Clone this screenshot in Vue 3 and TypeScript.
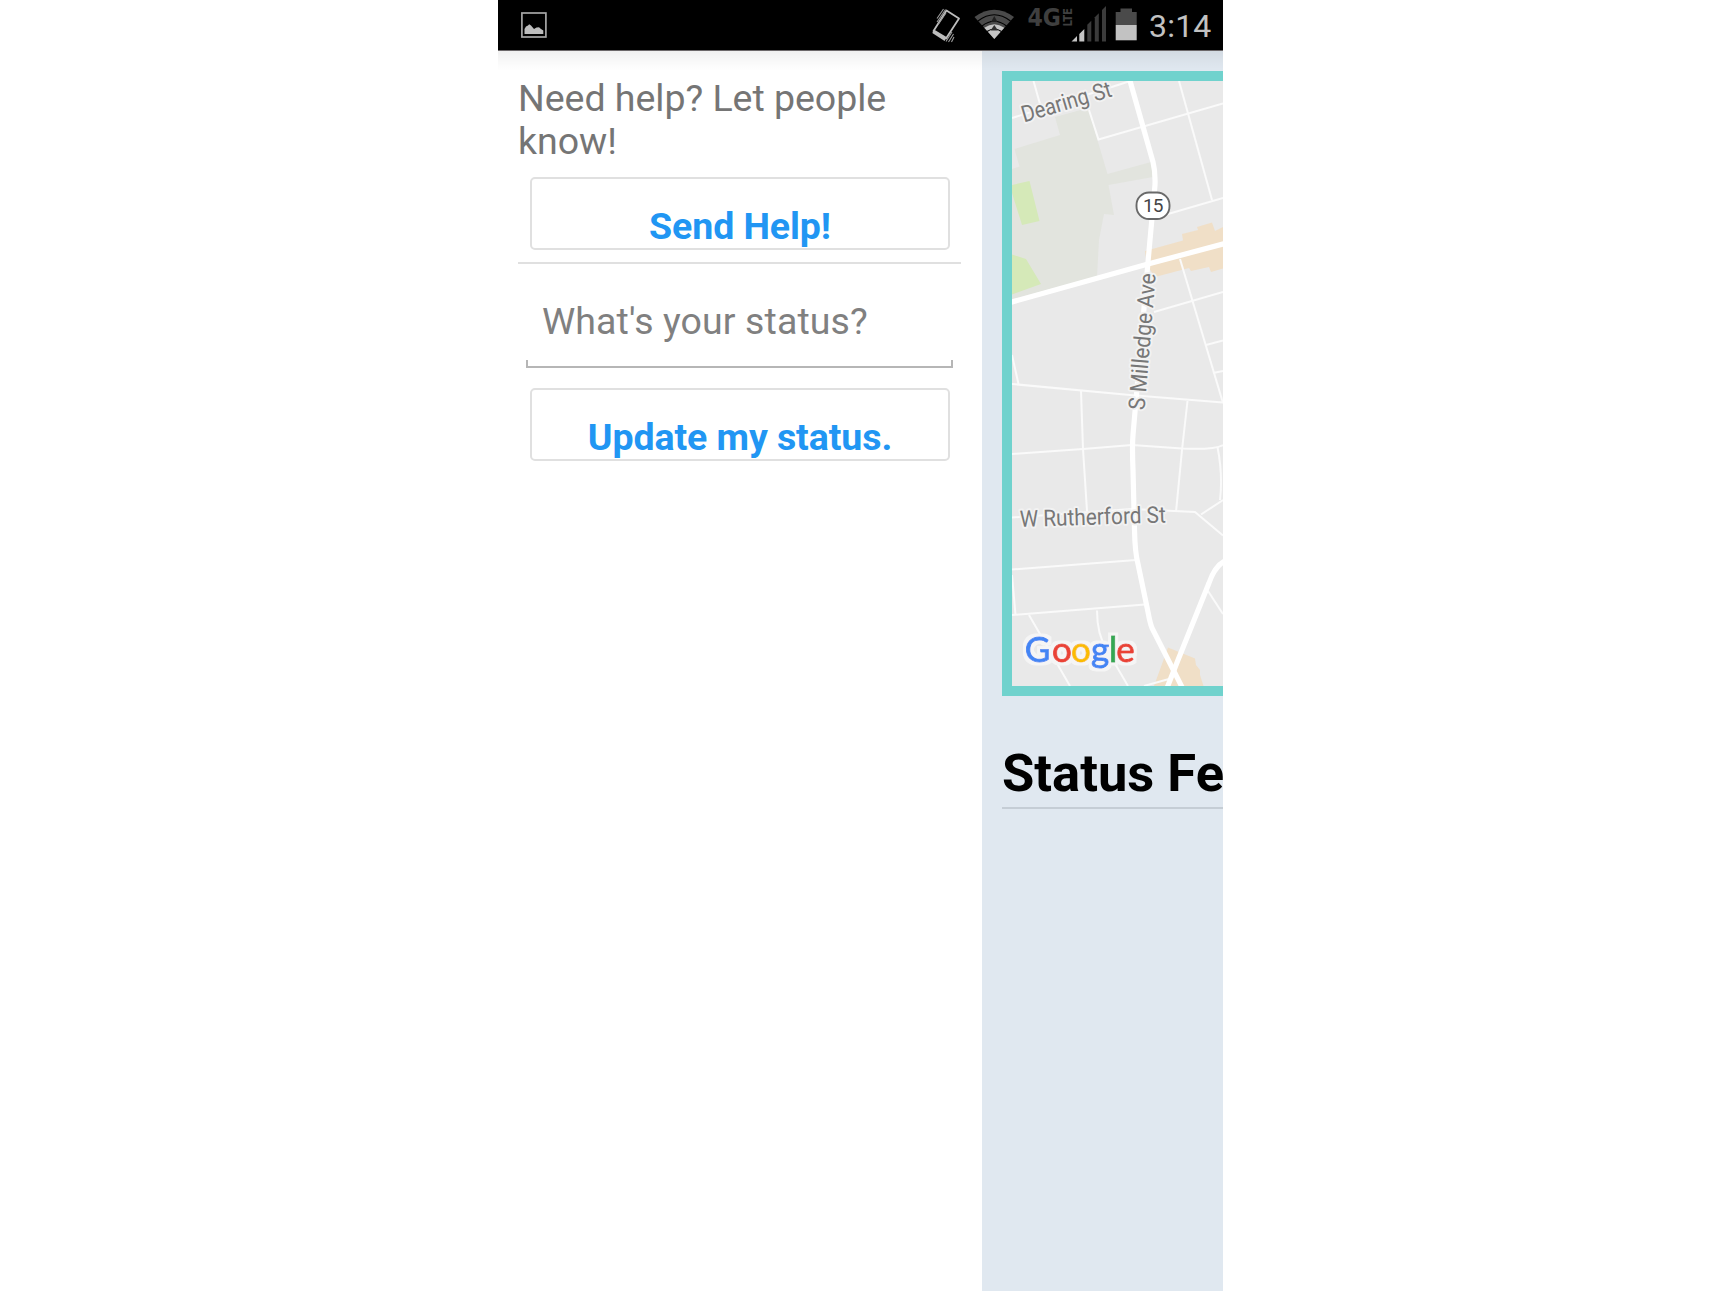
<script setup lang="ts">
import { ref } from 'vue'

const status = ref('')
const minorRoads: string[] = [
  'M1012 118 L1118 85 L1130 81',
  'M1033.500 81 L1040 104',
  'M1089 110 L1098.500 139.500 L1223 103.500',
  'M1179 81 L1212 200',
  'M1168 214 L1223 198',
  'M1180 259 L1223 403',
  'M1154 312 L1223 292',
  'M1206 345 L1223 340.500',
  'M1213 373 L1223 371',
  'M1012 384 L1130 395 L1223 402.500',
  'M1012 355 L1018.500 384',
  'M1081 391 L1083 449 L1087 511',
  'M1187.500 401 L1182 450 L1176 512',
  'M1012 454 L1083 449 L1132 445 L1182 448.500 Q1214 450 1223 445',
  'M1012 517.500 L1132 509 L1195 512 L1223 535.500',
  'M1201 514.500 L1223 500',
  'M1217.500 447 Q1223 475 1220 500',
  'M1012 569.500 L1136 560',
  'M1012 615 L1145 604.500',
  'M1012 575 L1015.500 615',
  'M1029 615 L1070 686',
  'M1097 610.500 Q1097 635 1107 650 L1128 686',
  'M1208 591 L1223 614',
  'M1144 686 L1169 679',
]
const bars: number[] = [1087.3, 1094.8, 1102]
</script>

<template>
  <div class="phone">
    <header class="status-bar">
      <svg class="ic-photo" width="26" height="26" viewBox="0 0 26 26">
        <rect x="0.900" y="1" width="24" height="24" fill="none" stroke="#a6a6a6" stroke-width="1.700" />
        <path d="M3.500 22 V17 L5 14.500 L7 13.500 L8.200 12.300 L10 13.500 L13 17 L15.500 15.500 L18 15.200 L20 17 L22.300 18.500 V22 Z" fill="#bdbdbd" />
      </svg>
      <div class="indicators">
        <svg class="ic-vibrate" width="30" height="36" viewBox="932 8 30 36">
          <path d="M946.500 10.500 L959 18.500 L946 38.500 L933.500 31 Z" fill="none" stroke="#bdbdbd" stroke-width="1.800" stroke-linejoin="round" />
          <path d="M934 29.500 L946.500 37 L944.600 41 L932.300 33 Z" fill="#bdbdbd" />
          <path d="M937 18.500 L943.500 9 M937 22 L945.500 9.500 M938.500 24 L946 13 M946 41.500 L952 32 M948.500 42 L953.500 34 M951.500 42 L954 37" fill="none" stroke="#9b9b9b" stroke-width="1.100" />
        </svg>
        <svg class="ic-wifi" width="40" height="30" viewBox="974 9 40 30">
          <path d="M974.500 17 Q994.300 2.500 1014 17 L994.300 39 Z" fill="#4a4a4a" />
          <path d="M984.300 27.800 Q994.300 20.500 1004.300 27.800 L994.300 39 Z" fill="#c4c4c4" />
          <path d="M978 21 Q994.300 8.500 1010.500 21 M982 26 Q994.300 16.500 1006.500 26 M987 31.500 Q994.300 26.500 1001.500 31.500" fill="none" stroke="#000" stroke-width="1.100" />
          <path d="M994.300 16 L997.500 22 H991 Z" fill="#202020" />
          <path d="M990.500 30.500 L994.300 25 L998 30.500 Z" fill="#303030" />
        </svg>
        <svg class="ic-signal" width="80" height="36" viewBox="1027 7 80 36">
          <text class="net" x="1027.500" y="26.300" textLength="33.500" lengthAdjust="spacingAndGlyphs">4G</text>
          <text class="lte" transform="translate(1071.600 26.500) rotate(-90)" textLength="18.500" lengthAdjust="spacingAndGlyphs">LTE</text>
          <path d="M1071.500 41.500 L1077 36 V41.500 Z M1079.300 41.500 V34 L1084.300 29 V41.500 Z" fill="#c4c4c4" />
          <path
            v-for="x in bars"
            :key="x"
            :d="`M${x} 41.500 V${1112 - x} L${x + 4} ${1108 - x} V41.500 Z`"
            fill="#3b3b3b"
          />
        </svg>
        <svg class="ic-battery" width="22" height="33" viewBox="1115 8 22 33">
          <path d="M1115.700 25 V12 H1120.500 V8.500 H1132 V12 H1136.700 V25 Z" fill="#4a4a4a" />
          <rect x="1115.700" y="25" width="21" height="15.300" fill="#c2c2c2" />
        </svg>
        <span class="clock">3:14</span>
      </div>
    </header>

    <div class="body">
      <aside class="drawer">
        <p class="prompt">Need help? Let people know!</p>
        <button class="btn" type="button"><span class="send">Send Help!</span></button>
        <hr class="rule" />
        <div class="field">
          <input v-model="status" class="input" type="text" placeholder="What's your status?" />
          <div class="bracket"></div>
        </div>
        <button class="btn" type="button"><span class="update">Update my status.</span></button>
      </aside>

      <main class="page">
        <div class="map">
          <svg width="211" height="605" viewBox="1012 81 211 605">
            <defs>
              <filter id="halo" x="-10%" y="-20%" width="120%" height="140%">
                <feMorphology in="SourceAlpha" operator="dilate" radius="3" result="d" />
                <feGaussianBlur in="d" stdDeviation="0.700" result="b" />
                <feFlood flood-color="#f5f5f5" />
                <feComposite in2="b" operator="in" result="h" />
                <feMerge><feMergeNode in="h" /><feMergeNode in="SourceGraphic" /></feMerge>
              </filter>
            </defs>
            <rect x="1012" y="81" width="211" height="605" fill="#e9e9e9" />
            <path d="M1055 117 L1088 108 L1107.500 174 L1151 162 L1153 177 L1108.500 185 L1114 215 L1104 214 L1099 240 L1097 277 L1012 299 V169 L1019.500 166.500 L1014.500 149 L1060 135 Z" fill="#e2e4de" />
            <path d="M1012 185 L1029.500 181 L1039.500 221 L1022 225 L1012 193 Z M1012 254.500 L1026 259 L1041 284 L1012 294.500 Z" fill="#d5e9b8" />
            <path d="M1145 251 L1183 240.500 L1182 234 L1198 230 L1197 227 L1212 222.500 L1215 231 L1223 227 V268.500 L1211 272 L1209 267 L1191 271 L1189 268 L1155 277 L1147 265 Z" fill="#f0dfc7" />
            <path d="M1168 647.500 L1195 658.500 L1196 665 L1200 670 L1200 675 L1203.500 686 H1154 Z" fill="#f0dfc7" />
            <g fill="none" stroke="#fafafa" stroke-width="2">
              <path v-for="d in minorRoads" :key="d" :d="d" />
            </g>
            <g fill="none" stroke="#fff" stroke-width="5.200" stroke-linejoin="round">
              <path d="M1129.500 79 L1153 162 Q1155.500 172 1155 185 L1148 262 L1133 435 Q1132 446 1133 470 L1134.500 530 Q1135 553 1138 564 L1148 612 Q1150 623 1152 628 L1183 689" />
              <path d="M1010 302.500 L1148 264 L1225 243.500" />
              <path d="M1225 561 Q1215 566 1209 583 L1178 660 L1167 688" />
            </g>
            <rect x="1136.500" y="192.500" width="33" height="26.500" rx="12.500" fill="#fff" stroke="#696969" stroke-width="1.900" />
            <text x="1143" y="212" class="shield" textLength="20.500">15</text>
            <text class="street" transform="translate(1024 122.500) rotate(-16.500)" textLength="93" lengthAdjust="spacingAndGlyphs">Dearing St</text>
            <text class="street" transform="translate(1144.500 410.500) rotate(-85.300)" textLength="137" lengthAdjust="spacingAndGlyphs">S Milledge Ave</text>
            <text class="street" transform="translate(1020 527) rotate(-1.800)" textLength="146" lengthAdjust="spacingAndGlyphs">W Rutherford St</text>
            <text class="google" y="662" filter="url(#halo)"><tspan x="1024.800" fill="#4285f4" stroke="#4285f4">G</tspan><tspan x="1052" fill="#ea4335" stroke="#ea4335">o</tspan><tspan x="1071" fill="#fbbc05" stroke="#fbbc05">o</tspan><tspan x="1091" fill="#4285f4" stroke="#4285f4">g</tspan><tspan x="1109" fill="#34a853" stroke="#34a853">l</tspan><tspan x="1116.300" fill="#ea4335" stroke="#ea4335">e</tspan></text>
          </svg>
        </div>
        <h1 class="feed">Status Feed</h1>
      </main>
    </div>
  </div>
</template>

<style>
body {
  background: #fff;
}
</style>

<style scoped>
.phone {
  display: flex;
  flex-direction: column;
  width: 725px;
  height: 1291px;
  margin-left: 498px;
  overflow: hidden;
  font-family: Roboto, "Liberation Sans", sans-serif;
}
.status-bar {
  box-sizing: border-box;
  flex: none;
  display: flex;
  justify-content: space-between;
  height: 51px;
  padding: 0 12px 0 23px;
  background: #000;
  border-bottom: 1px solid #6c686a;
}
.status-bar svg { flex: none; display: block; overflow: visible; }
.ic-photo { margin-top: 12px; }
.indicators { display: flex; align-items: flex-start; }
.ic-vibrate { margin-top: 8px; }
.ic-wifi { margin: 9px 0 0 12px; }
.ic-signal { margin: 7px 0 0 13px; }
.ic-battery { margin: 8px 0 0 8px; }
.net { font: bold 25px "DejaVu Sans", sans-serif; fill: #3f3f3f; }
.lte { font: bold 12px "DejaVu Sans", sans-serif; fill: #3f3f3f; }
.clock {
  width: 62px;
  margin: 5px 0 0 12px;
  font-size: 32px;
  line-height: 42px;
  letter-spacing: 0.2px;
  color: #c2c2c2;
  white-space: nowrap;
}
.body {
  position: relative;
  flex: 1;
  display: flex;
  min-height: 0;
}
.body::after {
  content: "";
  position: absolute;
  inset: 0 0 auto;
  height: 20px;
  background: linear-gradient(rgba(0, 0, 0, 0.06), rgba(0, 0, 0, 0.02) 60%, transparent);
  pointer-events: none;
}
.drawer {
  box-sizing: border-box;
  flex: none;
  width: 484px;
  padding: 26px 21px 0 20px;
  background: #fff;
}
.prompt {
  margin: 0 0 14px;
  font-size: 37.5px;
  line-height: 43px;
  letter-spacing: -0.03px;
  color: #757575;
}
.btn {
  box-sizing: border-box;
  display: flex;
  align-items: flex-start;
  justify-content: center;
  width: 420px;
  height: 73px;
  margin: 0 12px;
  padding: 26px 0 0;
  border: 2px solid #e0e0e0;
  border-radius: 5px;
  background: #fff;
  color: #2196f3;
  font: bold 37.5px/43px Roboto, "Liberation Sans", sans-serif;
  letter-spacing: -0.08px;
}
.rule {
  height: 2px;
  margin: 12px 0 0;
  border: 0;
  background: #e0e0e0;
}
.field {
  height: 104px;
  margin: 0 8px 20px;
  display: flex;
  flex-direction: column;
}
.input {
  box-sizing: border-box;
  width: 100%;
  height: 43px;
  margin: 36px 0 17px;
  padding: 0 0 0 16px;
  border: 0;
  outline: 0;
  background: transparent;
  font: 37.5px/43px Roboto, "Liberation Sans", sans-serif;
  letter-spacing: 0.1px;
  color: #757575;
}
.input::placeholder { color: #808080; opacity: 1; }
.bracket {
  height: 6px;
  border: 2px solid #b6b6b6;
  border-top: 0;
}
.page {
  flex: 1;
  min-width: 0;
  padding: 20px 0 0 20px;
  background: #e0e8f0;
  overflow: hidden;
}
.map {
  width: 211px;
  height: 605px;
  border: 10px solid #70d2cd;
  border-right: 0;
}
.map svg { display: block; }
.shield { font: 19px Roboto, sans-serif; fill: #444; }
.street {
  font: 23px Roboto, sans-serif;
  fill: #777;
  stroke: #f2f2f2;
  stroke-width: 4px;
  stroke-linejoin: round;
  paint-order: stroke;
}
.google {
  font: 35px Lato, sans-serif;
  stroke-width: 0.9px;
}
.feed {
  margin: 47px 0 0;
  padding-bottom: 3px;
  border-bottom: 2px solid #c5cdd5;
  font-size: 52.5px;
  line-height: 61px;
  font-weight: bold;
  color: #000;
  white-space: nowrap;
}
</style>
